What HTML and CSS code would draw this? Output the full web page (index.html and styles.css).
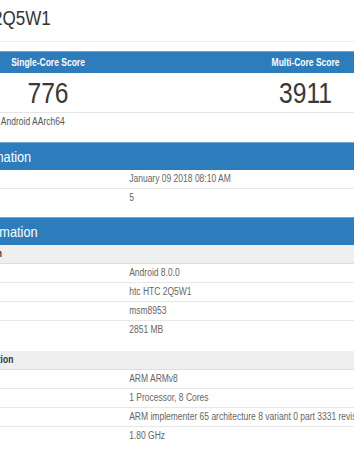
FILE: index.html
```html
<!DOCTYPE html>
<html lang="en">
<head>
    <meta charset="UTF-8">
    <meta name="viewport" content="width=device-width, initial-scale=1.0">
    <title>htc HTC 2Q5W1 - Geekbench Browser</title>
    <link rel="stylesheet" href="styles.css">
</head>
<body>
    <div class="frame">
        <div class="page">
            <h1 class="title">htc HTC 2Q5W1</h1>

            <div class="scores">
                <div class="scores-head">
                    <span>Single-Core Score</span>
                    <span>Multi-Core Score</span>
                </div>
                <div class="scores-row">
                    <span>776</span>
                    <span>3911</span>
                </div>
            </div>
            <div class="platform">Android AArch64</div>

            <div class="section">
                <div class="section-title">Result Information</div>
                <div class="row"><div class="label">Upload Date</div><div class="value">January 09 2018 08:10 AM</div></div>
                <div class="row"><div class="label">Views</div><div class="value">5</div></div>
            </div>

            <div class="section">
                <div class="section-title">System Information</div>
                <div class="subhead">System Information</div>
                <div class="row"><div class="label">Operating System</div><div class="value">Android 8.0.0</div></div>
                <div class="row"><div class="label">Model</div><div class="value">htc HTC 2Q5W1</div></div>
                <div class="row"><div class="label">Motherboard</div><div class="value">msm8953</div></div>
                <div class="row"><div class="label">Memory</div><div class="value">2851 MB</div></div>
                <div class="subhead second">Processor Information</div>
                <div class="row"><div class="label">Name</div><div class="value">ARM ARMv8</div></div>
                <div class="row"><div class="label">Topology</div><div class="value">1 Processor, 8 Cores</div></div>
                <div class="row"><div class="label">Identifier</div><div class="value">ARM implementer 65 architecture 8 variant 0 part 3331 revision 4</div></div>
                <div class="row"><div class="label">Base Frequency</div><div class="value">1.80 GHz</div></div>
            </div>
        </div>
    </div>
</body>
</html>
```

FILE: styles.css
```css
html, body {
    margin: 0;
    padding: 0;
    overflow: hidden;
    background-color: white;
}

body {
    font-family: "Liberation Sans", Arial, sans-serif;
    color: #333;
}

/* the shot is squeezed sideways, so the whole page is too */
.frame {
    width: 417px;
    transform: scaleX(0.85);
    transform-origin: 0 0;
}

.page {
    width: 530px;
    margin-left: -93px;
}

.title {
    margin: 0;
    padding: 6px 8px 11px 6px;
    font-size: 20px;
    font-weight: normal;
    line-height: 24px;
    color: #333;
    border-bottom: 1px solid #eee;
    white-space: nowrap;
}

.scores {
    margin-top: 9px;
}

.scores-head, .scores-row {
    display: flex;
    justify-content: space-between;
    padding: 0 17px 0 89px;
}

.scores-head span, .scores-row span {
    width: 121px;
    text-align: center;
}

.scores-head {
    padding-top: 1px;
    background-color: #2d7dbd;
    border-top: 1px solid #6ea7d6;
    color: white;
    font-size: 10px;
    font-weight: bold;
    line-height: 20px;
}

.scores-row {
    padding-top: 1px;
    font-size: 29px;
    line-height: 38px;
    color: #383838;
    border-bottom: 1px solid #e5e5e5;
}

.platform {
    padding: 2px 0 0 94px;
    font-size: 10px;
    line-height: 14px;
    color: #555;
}

.section {
    margin-top: 10px;
}

.platform + .section {
    margin-top: 13px;
}

.section-title {
    background-color: #2d7dbd;
    border-top: 1px solid #6ea7d6;
    color: white;
    font-size: 15px;
    line-height: 27px;
    padding-left: 8px;
    white-space: nowrap;
}

.subhead {
    background-color: #efefef;
    border-bottom: 1px solid #ddd;
    font-size: 10px;
    font-weight: bold;
    line-height: 18px;
    padding-left: 2px;
    color: #333;
    white-space: nowrap;
}

.subhead.second {
    margin-top: 12px;
}

.row {
    display: grid;
    grid-template-columns: 245px 1fr;
    font-size: 10px;
    line-height: 18px;
    color: #666;
    white-space: nowrap;
}

.row + .row {
    border-top: 1px solid #e8e8e8;
}

.label {
    padding-left: 8px;
    overflow: hidden;
}
```
